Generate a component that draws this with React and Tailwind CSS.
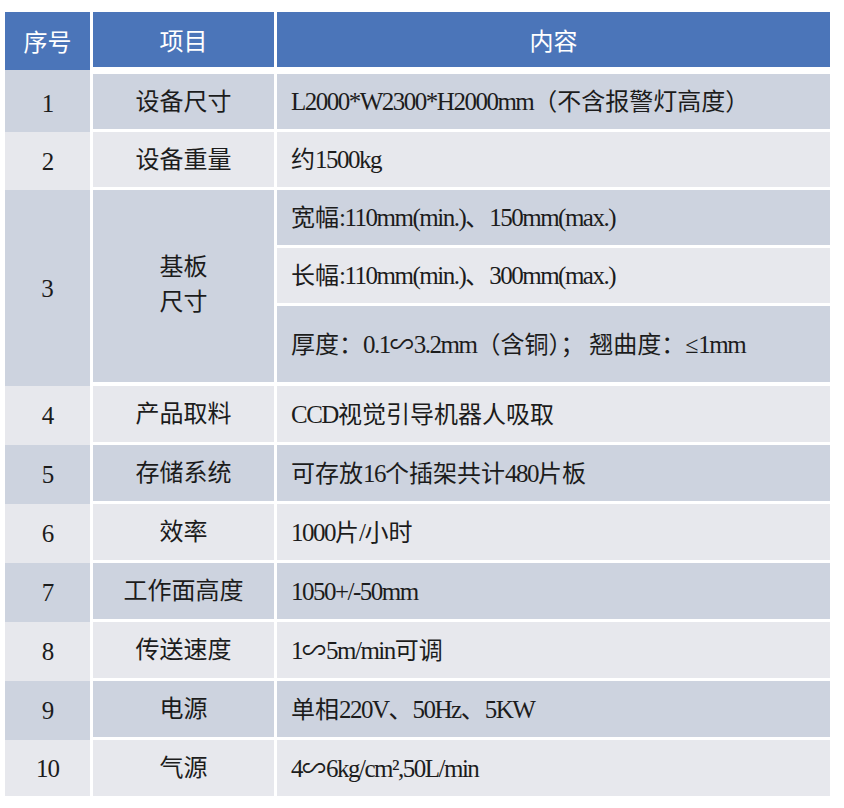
const DARK = 'bg-[#cdd3df]';
const LIGHT = 'bg-[#e7e8ed]';

// 每行：序号、项目、内容、行高（含白色间隔）、底色
const rows = [
  { no: '1', item: '设备尺寸', content: 'L2000*W2300*H2000mm（不含报警灯高度）', h: 'h-[58px]', bg: DARK },
  { no: '2', item: '设备重量', content: '约1500kg', h: 'h-[58px]', bg: LIGHT },
];

const rowsAfter = [
  { no: '4', item: '产品取料', content: 'CCD视觉引导机器人吸取', h: 'h-[59px]', bg: LIGHT },
  { no: '5', item: '存储系统', content: '可存放16个插架共计480片板', h: 'h-[59px]', bg: DARK },
  { no: '6', item: '效率', content: '1000片/小时', h: 'h-[59px]', bg: LIGHT },
  { no: '7', item: '工作面高度', content: '1050+/-50mm', h: 'h-[59px]', bg: DARK },
  { no: '8', item: '传送速度', content: '1∽5m/min可调', h: 'h-[59px]', bg: LIGHT },
  { no: '9', item: '电源', content: '单相220V、50Hz、5KW', h: 'h-[59px]', bg: DARK },
];

const subRows = [
  { content: '宽幅:110mm(min.)、150mm(max.)', h: 'h-[58px]', bg: DARK },
  { content: '长幅:110mm(min.)、300mm(max.)', h: 'h-[58px]', bg: LIGHT },
  { content: '厚度：0.1∽3.2mm（含铜）； 翘曲度：≤1mm', h: 'h-[80px]', bg: DARK },
];

const gridCols = 'grid grid-cols-[85px_181px_553px] gap-x-[3px]';
const bodyFont = 'font-["Liberation_Serif","Noto_Sans_CJK_SC",serif]';

// 西文与数字单独放大并收紧字距，模拟原图的窄体衬线字
function Mixed({ text }) {
  const parts = text.split(/([A-Za-z0-9*+\-/.,:()² ]+)/);
  return (
    <span>
      {parts.map((p, i) =>
        i % 2 === 1 ? (
          <span key={i} className="text-[25px] tracking-[-1.5px]">{p}</span>
        ) : (
          <span key={i}>{p}</span>
        )
      )}
    </span>
  );
}

function Row({ no, item, content, h, bg, last }) {
  const gap = last ? '' : 'border-b-[3px] border-white';
  return (
    <div className={`${gridCols} ${h}`}>
      <div className={`${bg} flex items-center justify-center text-[25px] tracking-[-1px]`}>{no}</div>
      <div className={`${bg} ${gap} flex items-center justify-center`}>{item}</div>
      <div className={`${bg} ${gap} flex items-center pl-[14px]`}>
        <Mixed text={content} />
      </div>
    </div>
  );
}

export default function App() {
  return (
    <div className="w-[844px] h-[808px] bg-white pt-[12px] pl-[5px]">
      <div className={`flex flex-col text-[24px] leading-none text-[#1c1c1c] ${bodyFont}`}>
        {/* 表头 */}
        <div className={`${gridCols} h-[62px] text-white font-["Noto_Sans_CJK_SC",sans-serif]`}>
          <div className="bg-[#4b75b9] border-b-4 border-[#cdd3df] flex items-center justify-center">序号</div>
          <div className="bg-[#4b75b9] border-b-[7px] border-white flex items-center justify-center">项目</div>
          <div className="bg-[#4b75b9] border-b-[7px] border-white flex items-center justify-center">内容</div>
        </div>

        {rows.map((r) => (
          <Row key={r.no} {...r} />
        ))}

        {/* 第3行：基板尺寸，内容分三行 */}
        <div className={`${gridCols} h-[196px]`}>
          <div className={`${DARK} flex items-center justify-center text-[25px]`}>3</div>
          <div className={`${DARK} border-b-4 border-white flex flex-col items-center justify-center leading-[35px] pb-[2px]`}>
            <span>基板</span>
            <span>尺寸</span>
          </div>
          <div className="flex flex-col">
            {subRows.map((s, i) => (
              <div
                key={i}
                className={`${s.bg} ${s.h} ${i === 2 ? 'border-b-4' : 'border-b-[3px]'} border-white flex items-center pl-[14px]`}
              >
                <Mixed text={s.content} />
              </div>
            ))}
          </div>
        </div>

        {rowsAfter.map((r) => (
          <Row key={r.no} {...r} />
        ))}

        <Row no="10" item="气源" content="4∽6kg/cm²,50L/min" h="h-[56px]" bg={LIGHT} last />
      </div>
    </div>
  );
}
